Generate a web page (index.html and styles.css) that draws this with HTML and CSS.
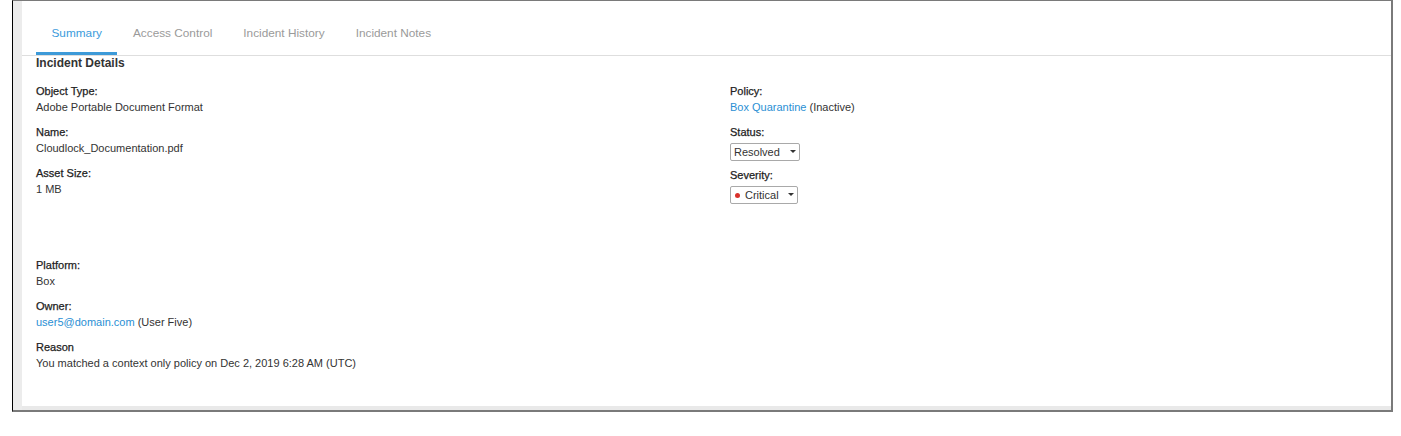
FILE: index.html
```html
<!DOCTYPE html>
<html lang="en">
<head>
    <meta charset="UTF-8">
    <title>Incident</title>
    <link rel="stylesheet" href="styles.css">
</head>
<body>
    <div class="frame">
        <div class="side"></div>
        <div class="main">
            <ul class="tabs">
                <li class="tab active">Summary</li>
                <li class="tab">Access Control</li>
                <li class="tab">Incident History</li>
                <li class="tab">Incident Notes</li>
            </ul>
            <div class="content">
                <h3 class="title">Incident Details</h3>
                <div class="cols">
                    <div class="col left">
                        <div class="field">
                            <div class="label">Object Type:</div>
                            <div class="value">Adobe Portable Document Format</div>
                        </div>
                        <div class="field">
                            <div class="label">Name:</div>
                            <div class="value">Cloudlock_Documentation.pdf</div>
                        </div>
                        <div class="field">
                            <div class="label">Asset Size:</div>
                            <div class="value">1 MB</div>
                        </div>
                    </div>
                    <div class="col right">
                        <div class="field">
                            <div class="label">Policy:</div>
                            <div class="value"><a class="link">Box Quarantine</a> (Inactive)</div>
                        </div>
                        <div class="field">
                            <div class="label">Status:</div>
                            <div class="select status">Resolved <span class="caret"></span></div>
                        </div>
                        <div class="field">
                            <div class="label">Severity:</div>
                            <div class="select severity"><span class="dot"></span>Critical <span class="caret"></span></div>
                        </div>
                    </div>
                </div>
                <div class="lower">
                    <div class="field">
                        <div class="label">Platform:</div>
                        <div class="value">Box</div>
                    </div>
                    <div class="field">
                        <div class="label">Owner:</div>
                        <div class="value"><a class="link">user5@domain.com</a> (User Five)</div>
                    </div>
                    <div class="field">
                        <div class="label">Reason</div>
                        <div class="value">You matched a context only policy on Dec 2, 2019 6:28 AM (UTC)</div>
                    </div>
                </div>
            </div>
        </div>
    </div>
</body>
</html>
```

FILE: styles.css
```css
body{
    margin: 0;
    background: #fff;
    font-family: "Liberation Sans", Arial, sans-serif;
    color: #333;
}
.frame{
    margin-left: 12px;
    width: 1381px;
    height: 412px;
    box-sizing: border-box;
    border-left: 1px solid #000;
    border-top: 1px solid #7a7a7a;
    border-right: 2px solid #7a7a7a;
    border-bottom: 2px solid #7a7a7a;
    display: flex;
}
.side{
    width: 9px;
    background: #ececec;
}
.main{
    flex: 1;
    border-bottom: 4px solid #e9e9e9;
}
.tabs{
    list-style: none;
    margin: 0;
    padding: 24px 0 0 14px;
    display: flex;
    border-bottom: 1px solid #dedede;
}
.tab{
    font-size: 11.8px;
    line-height: 16px;
    color: #9a9a9a;
    padding: 0 15.5px 11px;
    border-bottom: 3px solid transparent;
}
.tab.active{
    color: #3b9bdc;
    border-bottom-color: #3d9ad8;
}
.content{
    padding: 0 14px;
}
.title{
    margin: 0;
    font-size: 12px;
    line-height: 14px;
    font-weight: bold;
    color: #333;
}
.cols{
    display: grid;
    grid-template-columns: 694px 1fr;
    margin-top: 13px;
}
.field{
    margin-bottom: 9px;
}
.label{
    font-size: 11px;
    line-height: 16px;
    color: #222;
    -webkit-text-stroke: 0.25px #222;
}
.value{
    font-size: 11px;
    line-height: 16px;
    color: #333;
}
.link{
    color: #2a8fd4;
}
.right .field{
    margin-bottom: 6px;
}
.right .field:first-child{
    margin-bottom: 9px;
}
.select{
    margin-top: 3px;
    height: 18px;
    box-sizing: border-box;
    border: 1px solid #a9a9a9;
    border-radius: 2px;
    font-size: 11px;
    line-height: 16px;
    color: #333;
    display: flex;
    align-items: center;
    padding-left: 3px;
    position: relative;
}
.status{
    width: 70px;
}
.severity{
    width: 68px;
}
.dot{
    width: 5px;
    height: 5px;
    border-radius: 50%;
    background: #d9312b;
    margin: 0 5px 0 1px;
}
.caret{
    position: absolute;
    right: 3px;
    top: 6px;
    width: 0;
    height: 0;
    border-left: 3.5px solid transparent;
    border-right: 3.5px solid transparent;
    border-top: 3.5px solid #333;
}
.lower{
    margin-top: 47px;
}
```
